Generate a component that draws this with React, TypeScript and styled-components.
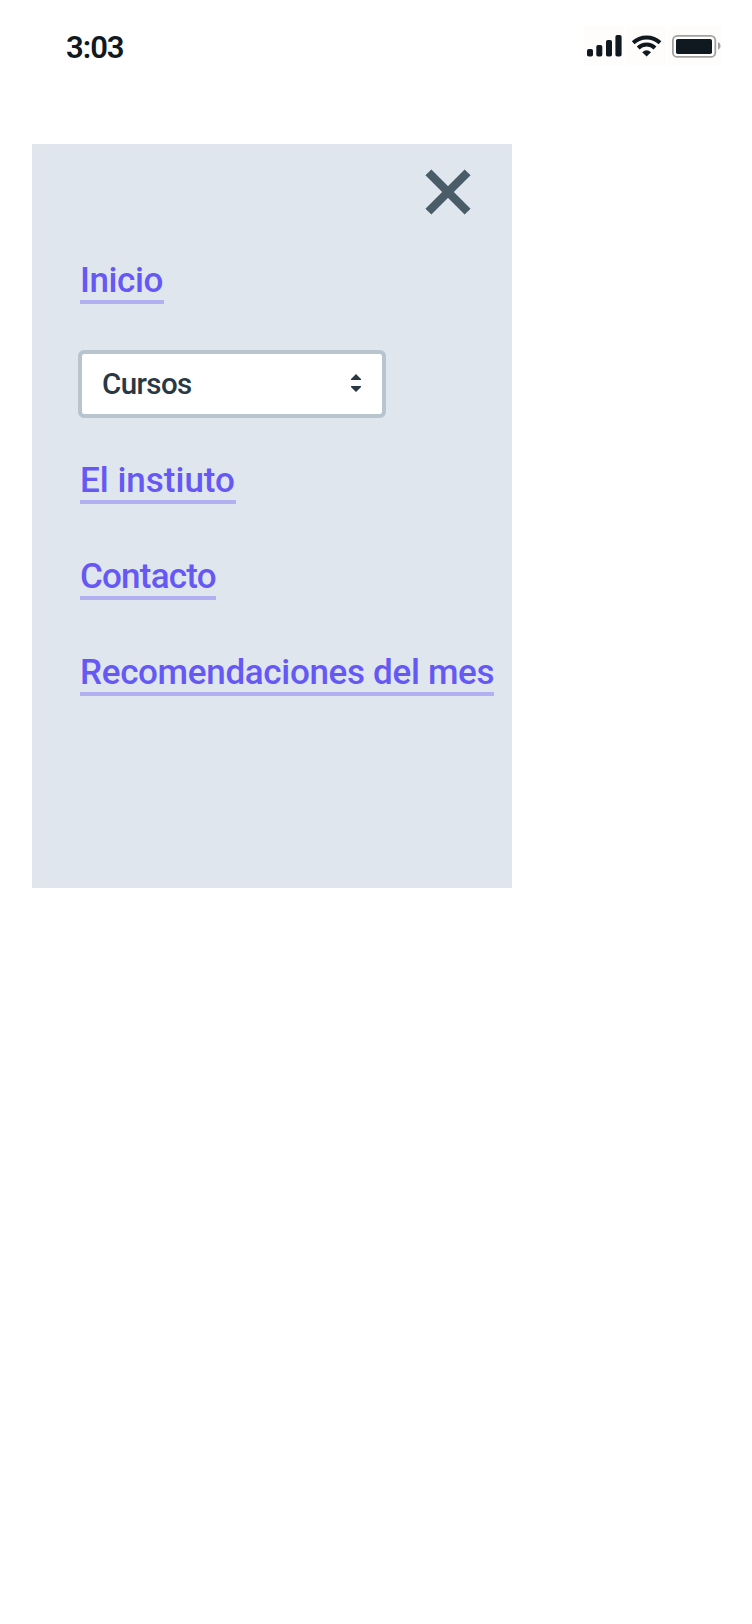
import React from 'react';
import styled, { createGlobalStyle } from 'styled-components';

const GlobalStyle = createGlobalStyle`
  * { box-sizing: border-box; }
  body { margin: 0; background: #fff; font-family: Roboto, "Liberation Sans", sans-serif; }
`;

const Screen = styled.main`
  min-height: 1624px;
  background: #fff;
`;

const StatusBar = styled.header`
  display: flex;
  justify-content: space-between;
  align-items: flex-start;
  height: 144px;
  padding: 26px 30px 0 66px;
`;

const Time = styled.time`
  width: 60px;
  line-height: 44px;
  font-size: 31px;
  font-weight: 600;
  letter-spacing: -1px;
  white-space: nowrap;
  color: #101820;
`;

const StatusIcons = styled.div`
  display: flex;
  gap: 2px;

  svg {
    display: block;
    background: #fffdfc;
  }
`;

const Menu = styled.nav`
  display: flex;
  flex-direction: column;
  align-items: flex-start;
  width: 480px;
  height: 744px;
  margin-left: 32px;
  padding: 24px 0 0 48px;
  background: #dfe6ee;
`;

const CloseButton = styled.button`
  align-self: flex-end;
  display: flex;
  width: 48px;
  height: 48px;
  margin-right: 40px;
  padding: 0;
  border: 0;
  background: none;
  color: #4b5c69;
`;

const MenuLink = styled.a<{ $width: number; $tracking: number; $gap: number }>`
  width: ${(p) => p.$width}px;
  height: 48px;
  margin-top: ${(p) => p.$gap}px;
  border-bottom: 4px solid #b2b0f0;
  line-height: 50px;
  font-size: 35px;
  font-weight: 500;
  letter-spacing: ${(p) => p.$tracking}px;
  white-space: nowrap;
  text-decoration: none;
  color: #6558f5;
`;

const Select = styled.button`
  display: flex;
  align-items: center;
  justify-content: space-between;
  width: 308px;
  height: 68px;
  margin: 46px 0 0 -2px;
  padding: 0 21px 0 20px;
  border: 4px solid #b8c4ce;
  border-radius: 6px;
  background: #fff;
  font-family: inherit;
  font-size: 29.5px;
  font-weight: 500;
  letter-spacing: -0.6px;
  line-height: 40px;
  color: #283845;

  svg {
    margin-bottom: 2px;
  }
`;

export default function App() {
  return (
    <>
      <GlobalStyle />
      <Screen>
        <StatusBar>
          <Time>3:03</Time>
          <StatusIcons>
            <svg width="40" height="40" viewBox="0 0 40 40" fill="#101820">
              <rect x="3" y="23" width="6" height="7.5" rx="1.8" />
              <rect x="12.3" y="19" width="6" height="11.5" rx="1.8" />
              <rect x="22" y="14" width="6" height="16.5" rx="1.8" />
              <rect x="31.4" y="9" width="6.2" height="21.5" rx="1.8" />
            </svg>
            <svg width="40" height="40" viewBox="0 0 40 40" fill="none" stroke="#101820" strokeWidth="4">
              <path d="M7.2 16.8a19.3 19.3 0 0 1 26.8 0" />
              <path d="M12.2 22a12 12 0 0 1 16.8 0" />
              <path d="M16.2 26.2q4.4-3.8 8.8 0L20.6 30.6z" fill="#101820" stroke="none" />
            </svg>
            <svg width="54" height="40" viewBox="0 0 54 40">
              <rect x="4.9" y="9.9" width="42.4" height="21" rx="4.5" fill="#fff" stroke="#a3a2a2" strokeWidth="1.8" />
              <rect x="8" y="13" width="36" height="15" rx="1.8" fill="#101820" />
              <path d="M50 16q2.6 1.2 2.6 4t-2.6 4z" fill="#a3a2a2" />
            </svg>
          </StatusIcons>
        </StatusBar>
        <Menu>
          <CloseButton aria-label="Cerrar">
            <svg width="48" height="48" viewBox="0 0 48 48" stroke="currentColor" strokeWidth="8.4">
              <path d="M4.4 4.4l39.2 39.2M43.6 4.4L4.4 43.6" />
            </svg>
          </CloseButton>
          <MenuLink href="#" $width={84} $tracking={-0.4} $gap={40}>Inicio</MenuLink>
          <Select aria-haspopup="listbox">
            <span>Cursos</span>
            <svg width="10" height="18" viewBox="0 0 10 18" fill="#283845">
              <path d="M5 0l5 5v1H0V5zM5 18l5-5v-1H0v1z" />
            </svg>
          </Select>
          <MenuLink href="#" $width={156} $tracking={0} $gap={38}>El instiuto</MenuLink>
          <MenuLink href="#" $width={136} $tracking={-0.8} $gap={48}>Contacto</MenuLink>
          <MenuLink href="#" $width={414} $tracking={-0.32} $gap={48}>Recomendaciones del mes</MenuLink>
        </Menu>
      </Screen>
    </>
  );
}
